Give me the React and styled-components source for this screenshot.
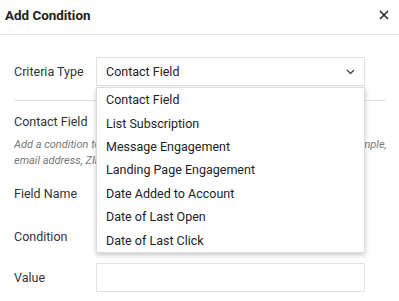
import React from "react";
import styled, { createGlobalStyle } from "styled-components";

const Global = createGlobalStyle`
  html, body { margin: 0; padding: 0; background: #fff; }
  body { font-family: Roboto, "Liberation Sans", sans-serif; color: #333; }
  * { box-sizing: border-box; }
`;

const Dialog = styled.div`
  width: 399px;
  height: 301px;
  overflow: hidden;
  background: #fff;
`;

const Header = styled.div`
  height: 35px;
  display: flex;
  align-items: center;
  justify-content: space-between;
  padding: 0 9px 4px 5px;
  border-bottom: 1px solid #e2e2e2;
`;

const Title = styled.h2`
  margin: 0;
  font-size: 13.4px;
  font-weight: 700;
  color: #222;
`;

const Close = styled.button`
  border: 0;
  background: none;
  padding: 0;
  width: 12px;
  height: 12px;
  display: flex;
  align-items: center;
  justify-content: center;
  color: #222;
`;

const Body = styled.div`
  padding: 22px 13px 0 14px;
`;

const Row = styled.div`
  display: grid;
  grid-template-columns: 82px 269px;
  align-items: center;
  margin-bottom: ${(p) => p.$mb || 0}px;
`;

const Label = styled.div`
  font-size: 12.5px;
  color: #333;
`;

const SelectWrap = styled.div`
  position: relative;
`;

const SelectBox = styled.div`
  height: 29px;
  border: 1px solid #e0e0e0;
  display: flex;
  align-items: center;
  justify-content: space-between;
  padding: 0 9px 0 9px;
  font-size: 12.5px;
  color: #222;
  background: #fff;
`;

const Input = styled.div`
  height: 29px;
  border: 1px solid #e2e2e2;
  background: #fff;
`;

const Divider = styled.div`
  height: 1px;
  background: #e2e2e2;
  margin: 14px 0 13px 0;
  width: 372px;
`;

const SectionTitle = styled.div`
  font-size: 12.5px;
  color: #333;
  margin-bottom: 8px;
`;

const Help = styled.p`
  margin: 0 0 10px 0;
  font-size: 11px;
  line-height: 16px;
  font-style: italic;
  color: #777;
  width: 374px;
  white-space: nowrap;
  overflow: hidden;
`;

const Menu = styled.ul`
  position: absolute;
  left: 0;
  right: 0;
  top: 30px;
  margin: 0;
  padding: 0;
  list-style: none;
  background: #fff;
  border: 1px solid #dcdcdc;
  box-shadow: 0 2px 5px rgba(0, 0, 0, 0.22);
  z-index: 5;
`;

const Item = styled.li`
  height: 23.4px;
  display: flex;
  align-items: center;
  padding-left: 9px;
  font-size: 12.5px;
  color: #222;
`;

const options = [
  "Contact Field",
  "List Subscription",
  "Message Engagement",
  "Landing Page Engagement",
  "Date Added to Account",
  "Date of Last Open",
  "Date of Last Click",
];

export default function App() {
  return (
    <Dialog>
      <Global />
      <Header>
        <Title>Add Condition</Title>
        <Close aria-label="Close">
          <svg width="10" height="10" viewBox="0 0 10 10">
            <path d="M1 1L9 9M9 1L1 9" stroke="#222" strokeWidth="1.5" />
          </svg>
        </Close>
      </Header>
      <Body>
        <Row>
          <Label>Criteria Type</Label>
          <SelectWrap>
            <SelectBox>
              <span>Contact Field</span>
              <svg width="9" height="6" viewBox="0 0 9 6">
                <path d="M1 1L4.5 4.5L8 1" stroke="#444" strokeWidth="1.3" fill="none" />
              </svg>
            </SelectBox>
            <Menu>
              {options.map((o) => (
                <Item key={o}>{o}</Item>
              ))}
            </Menu>
          </SelectWrap>
        </Row>
        <Divider />
        <SectionTitle>Contact Field</SectionTitle>
        <Help>
          Add a condition to include contacts by the value of a contact field, for example,
          <br />
          email address, ZIP code or date of birth.
        </Help>
        <Row $mb={14}>
          <Label>Field Name</Label>
          <SelectBox />
        </Row>
        <Row $mb={12}>
          <Label>Condition</Label>
          <SelectBox />
        </Row>
        <Row>
          <Label>Value</Label>
          <Input />
        </Row>
      </Body>
    </Dialog>
  );
}
